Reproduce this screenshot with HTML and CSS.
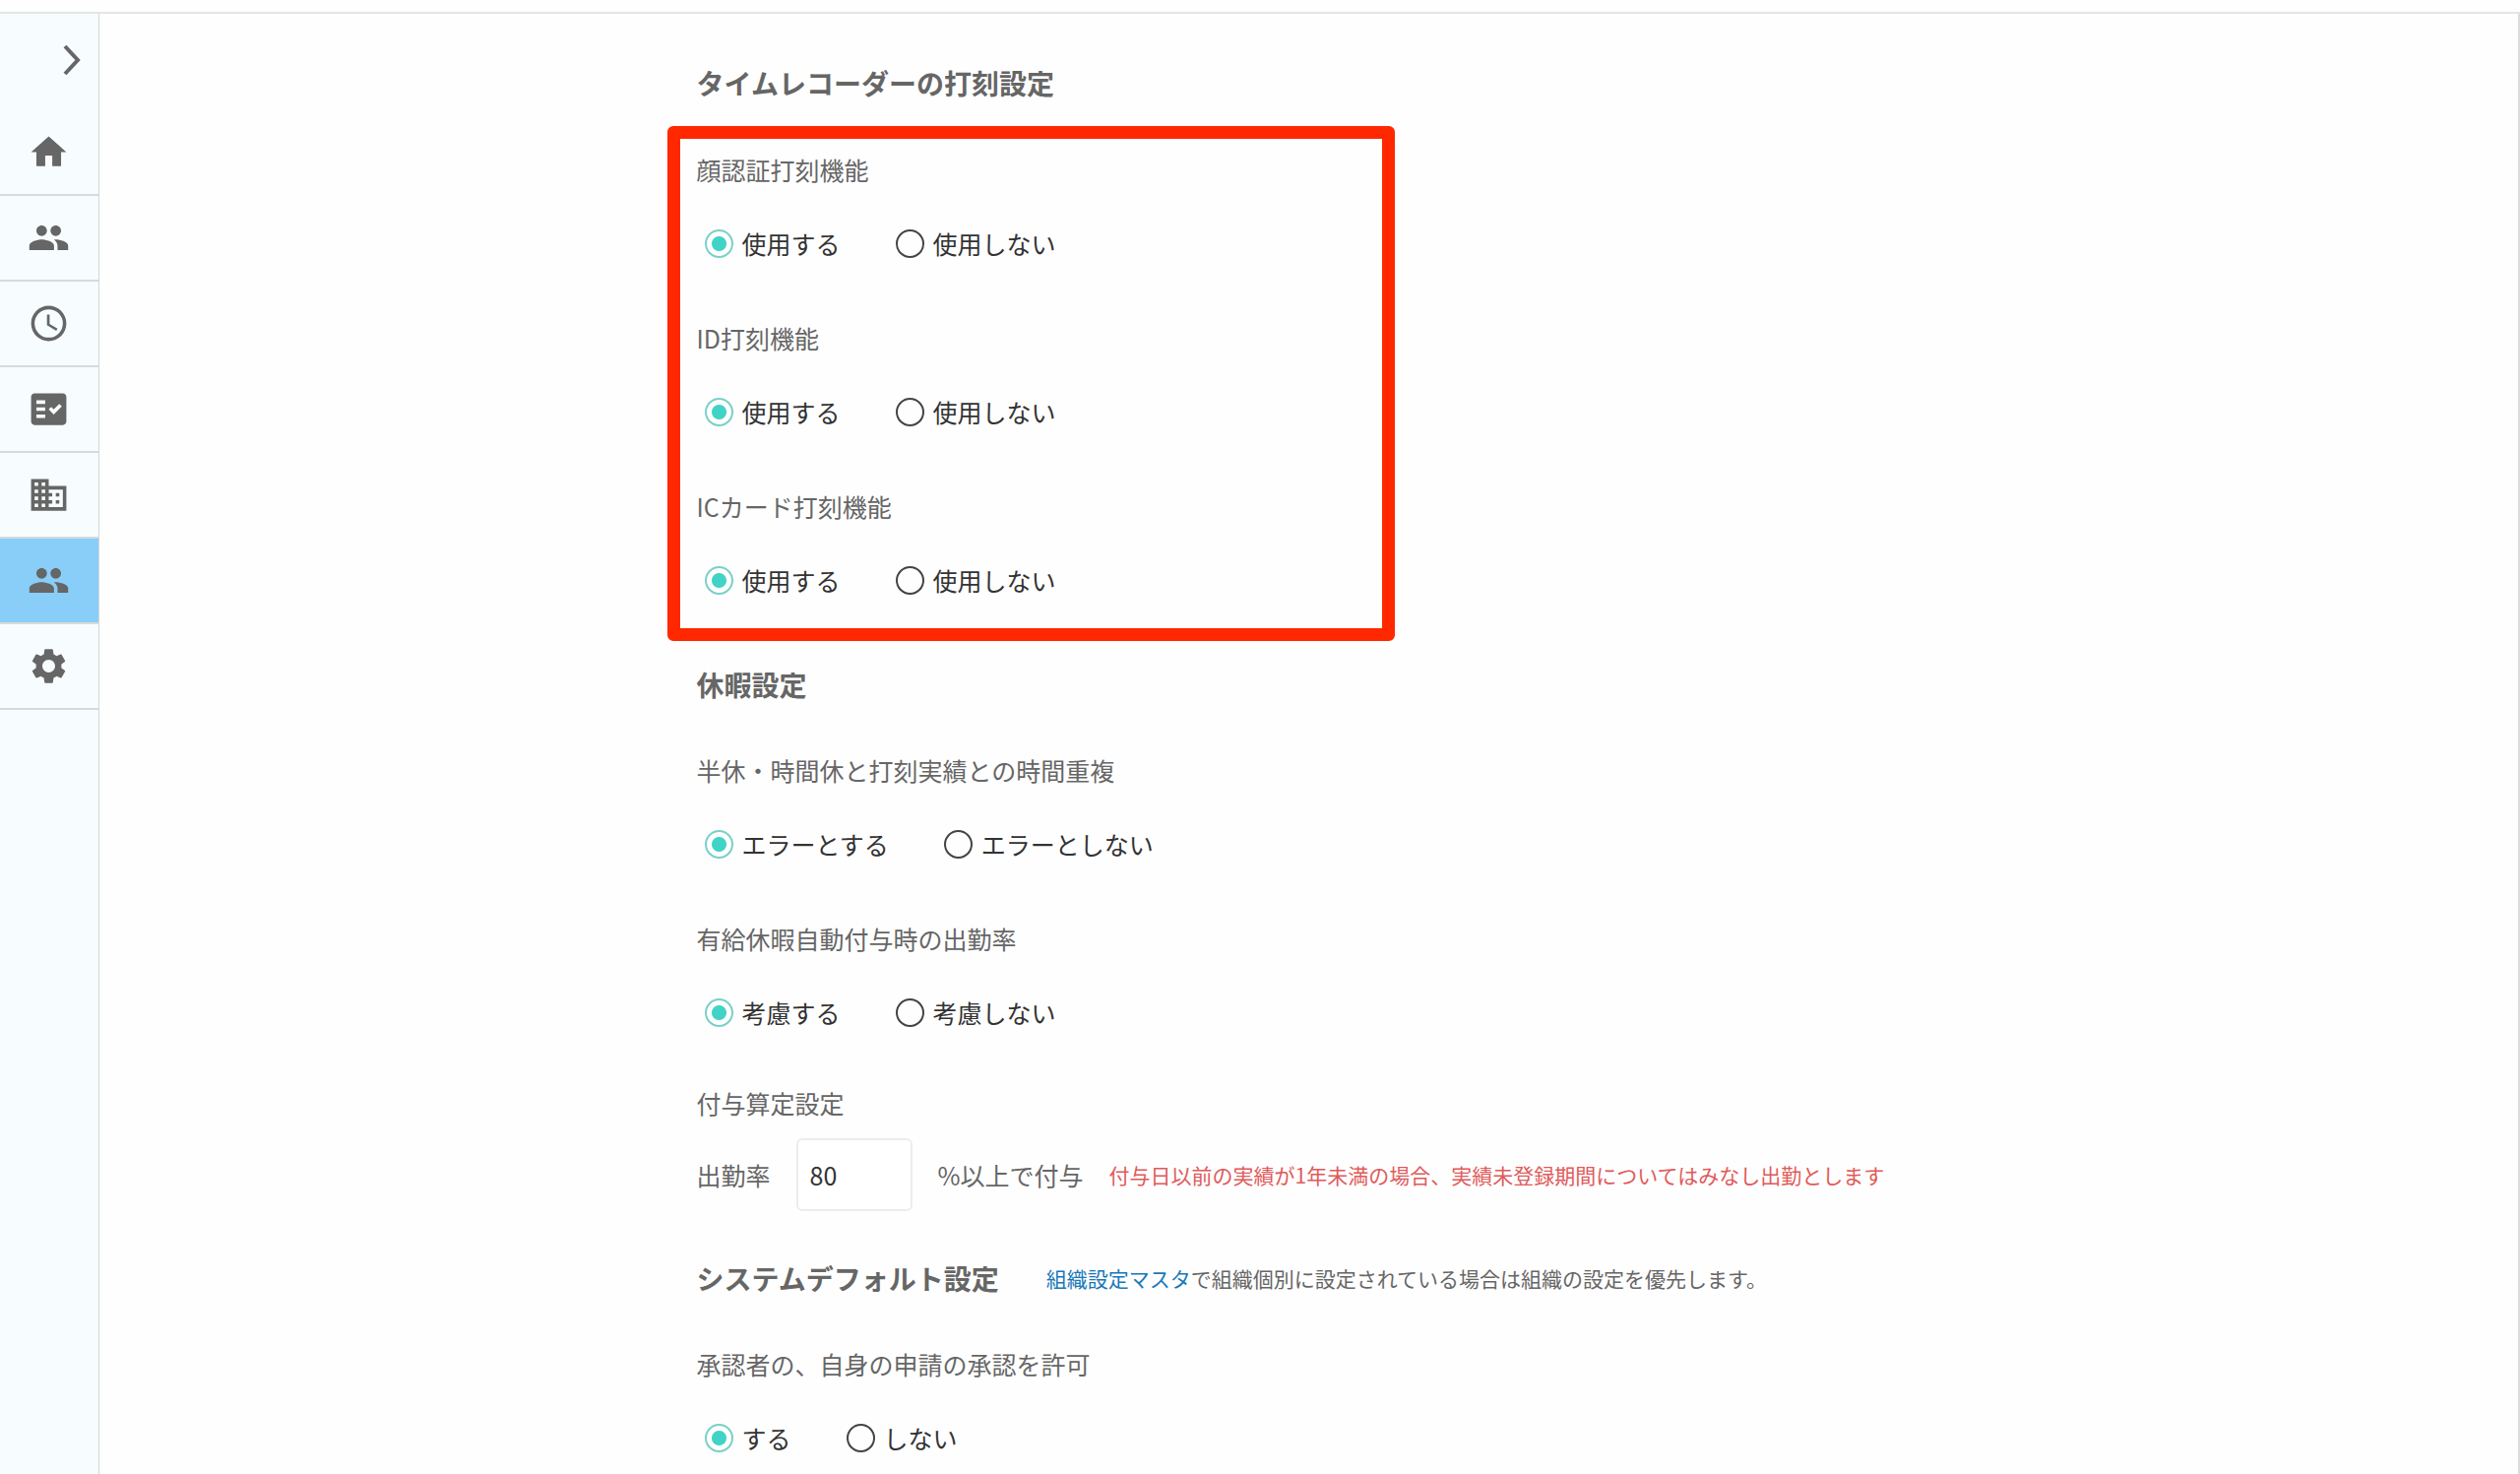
FILE: index.html
```html
<!DOCTYPE html>
<html lang="ja">
  <head>
    <meta charset="UTF-8" />
    <meta name="viewport" content="width=device-width, initial-scale=1.0" />
    <title>打刻設定</title>
    <link rel="stylesheet" href="styles.css">
  </head>
  <body>
    <header class="topbar"></header>
    <div class="layout">
      <nav class="sidebar">
        <button class="toggle" type="button" aria-label="メニューを開く">
          <svg width="18" height="32" viewBox="0 0 18 32"><path d="M2 2l13 14L2 30" fill="none" stroke="currentColor" stroke-width="4" /></svg>
        </button>
        <a class="item" href="#" aria-label="ホーム">
          <svg class="icon" viewBox="0 0 24 24"><path d="M10 20v-6h4v6h5v-8h3L12 3 2 12h3v8z" /></svg>
        </a>
        <a class="item" href="#" aria-label="従業員">
          <svg class="icon" viewBox="0 0 24 24"><path d="M16 11c1.660 0 2.990-1.340 2.990-3S17.660 5 16 5s-3 1.340-3 3 1.340 3 3 3zm-8 0c1.660 0 2.990-1.340 2.990-3S9.660 5 8 5 5 6.340 5 8s1.340 3 3 3zm0 2c-2.330 0-7 1.170-7 3.500V19h14v-2.500c0-2.330-4.670-3.500-7-3.500zm8 0c-.29 0-.62.020-.97.050 1.160.84 1.970 1.970 1.970 3.450V19h6v-2.500c0-2.330-4.670-3.500-7-3.500z" /></svg>
        </a>
        <a class="item" href="#" aria-label="勤怠">
          <svg class="icon" viewBox="0 0 24 24"><path d="M11.990 2C6.470 2 2 6.480 2 12s4.470 10 9.990 10C17.520 22 22 17.520 22 12S17.520 2 11.990 2zM12 20a8 8 0 1 1 0-16 8 8 0 0 1 0 16zM12.500 7H11v6l5.250 3.150.75-1.230-4.500-2.670z" /></svg>
        </a>
        <a class="item" href="#" aria-label="申請">
          <svg class="icon" viewBox="0 0 24 24"><path fill-rule="evenodd" d="M20 3H4c-1.100 0-2 .9-2 2v14c0 1.100.9 2 2 2h16c1.100 0 2-.9 2-2V5c0-1.100-.9-2-2-2zM10 17H5v-2h5v2zm0-4H5v-2h5v2zm0-4H5V7h5v2zm4.820 6L12 12.160l1.410-1.410 1.410 1.420L17.990 9l1.420 1.420L14.820 15z" /></svg>
        </a>
        <a class="item" href="#" aria-label="会社">
          <svg class="icon" viewBox="0 0 24 24"><path d="M12 7V3H2v18h20V7H12zM6 19H4v-2h2v2zm0-4H4v-2h2v2zm0-4H4V9h2v2zm0-4H4V5h2v2zm4 12H8v-2h2v2zm0-4H8v-2h2v2zm0-4H8V9h2v2zm0-4H8V5h2v2zm10 12h-8v-2h2v-2h-2v-2h2v-2h-2V9h8v10zm-2-8h-2v2h2v-2zm0 4h-2v2h2v-2z" /></svg>
        </a>
        <a class="item active" href="#" aria-label="マスタ">
          <svg class="icon" viewBox="0 0 24 24"><path d="M16 11c1.660 0 2.990-1.340 2.990-3S17.660 5 16 5s-3 1.340-3 3 1.340 3 3 3zm-8 0c1.660 0 2.990-1.340 2.990-3S9.660 5 8 5 5 6.340 5 8s1.340 3 3 3zm0 2c-2.330 0-7 1.170-7 3.500V19h14v-2.500c0-2.330-4.670-3.500-7-3.500zm8 0c-.29 0-.62.020-.97.050 1.160.84 1.970 1.970 1.970 3.450V19h6v-2.500c0-2.330-4.670-3.500-7-3.500z" /></svg>
        </a>
        <a class="item" href="#" aria-label="設定">
          <svg class="icon" viewBox="0 0 24 24"><path d="M19.140 12.940c.04-.3.060-.61.060-.94 0-.32-.02-.64-.07-.94l2.030-1.580c.18-.14.23-.41.12-.61l-1.920-3.320c-.12-.22-.37-.29-.59-.22l-2.390.96c-.5-.38-1.030-.7-1.620-.94l-.36-2.540c-.04-.24-.24-.41-.48-.41h-3.840c-.24 0-.43.17-.47.41l-.36 2.540c-.59.24-1.130.57-1.620.94l-2.390-.96c-.22-.08-.47 0-.59.22L2.740 8.870c-.12.21-.08.47.12.61l2.030 1.580c-.05.3-.09.63-.09.94s.02.64.070.94l-2.030 1.580c-.18.14-.23.41-.12.61l1.920 3.320c.12.22.37.29.59.22l2.390-.96c.5.38 1.030.7 1.620.94l.36 2.540c.05.24.24.41.48.41h3.840c.24 0 .44-.17.47-.41l.36-2.540c.59-.24 1.130-.56 1.620-.94l2.390.96c.22.080.47 0 .59-.22l1.920-3.320c.12-.22.070-.47-.12-.61l-2.010-1.580zM12 15.600c-1.980 0-3.600-1.620-3.600-3.600s1.620-3.600 3.600-3.600 3.600 1.620 3.600 3.600-1.620 3.600-3.600 3.600z" /></svg>
        </a>
      </nav>
      <main class="main">
        <form class="content">
          <h2>タイムレコーダーの打刻設定</h2>
          <div class="highlight">
            <fieldset>
              <legend>顔認証打刻機能</legend>
              <div class="radios">
                <label><input type="radio" name="face" checked />使用する</label>
                <label><input type="radio" name="face" />使用しない</label>
              </div>
            </fieldset>
            <fieldset>
              <legend>ID打刻機能</legend>
              <div class="radios">
                <label><input type="radio" name="id" checked />使用する</label>
                <label><input type="radio" name="id" />使用しない</label>
              </div>
            </fieldset>
            <fieldset>
              <legend>ICカード打刻機能</legend>
              <div class="radios">
                <label><input type="radio" name="card" checked />使用する</label>
                <label><input type="radio" name="card" />使用しない</label>
              </div>
            </fieldset>
          </div>

          <h2>休暇設定</h2>
          <div class="group">
            <fieldset>
              <legend>半休・時間休と打刻実績との時間重複</legend>
              <div class="radios">
                <label><input type="radio" name="overlap" checked />エラーとする</label>
                <label><input type="radio" name="overlap" />エラーとしない</label>
              </div>
            </fieldset>
            <fieldset>
              <legend>有給休暇自動付与時の出勤率</legend>
              <div class="radios">
                <label><input type="radio" name="attendance" checked />考慮する</label>
                <label><input type="radio" name="attendance" />考慮しない</label>
              </div>
            </fieldset>
            <fieldset class="calc">
              <legend>付与算定設定</legend>
              <div class="rate">
                <label for="rate">出勤率</label>
                <input id="rate" type="text" value="80" />
                <span>%以上で付与</span>
                <span class="note error">付与日以前の実績が1年未満の場合、実績未登録期間についてはみなし出勤とします</span>
              </div>
            </fieldset>
          </div>

          <div class="heading">
            <h2>システムデフォルト設定</h2>
            <p class="note"><a href="#">組織設定マスタ</a>で組織個別に設定されている場合は組織の設定を優先します。</p>
          </div>
          <div class="group">
            <fieldset>
              <legend>承認者の、自身の申請の承認を許可</legend>
              <div class="radios">
                <label><input type="radio" name="self" checked />する</label>
                <label><input type="radio" name="self" />しない</label>
              </div>
            </fieldset>
          </div>
        </form>
      </main>
    </div>
  </body>
</html>
```
FILE: styles.css
```css
* {
  margin: 0;
  padding: 0;
  box-sizing: border-box;
}
body {
  display: flex;
  flex-direction: column;
  min-height: 100vh;
  font-family: "Noto Sans CJK JP", sans-serif;
  font-size: 25px;
  line-height: 36px;
  color: #666;
  background: #fefefe;
}
.topbar {
  height: 14px;
  border-bottom: 2px solid #e4e5e6;
}
.layout {
  display: flex;
  flex: 1;
}
.sidebar {
  width: 101px;
  background: #f7fdff;
  border-right: 1px solid #d3d7da;
}
.toggle {
  display: flex;
  align-items: center;
  justify-content: flex-end;
  width: 100%;
  height: 98px;
  padding: 0 18px 4px 0;
  color: #666;
  background: none;
  border: 0;
  cursor: pointer;
}
.item {
  display: flex;
  align-items: center;
  justify-content: center;
  height: 87px;
  padding-right: 1px;
  color: #666;
  border-bottom: 2px solid #d6dadd;
}
.item.active {
  background: #89cdf9;
}
.icon {
  width: 43px;
  height: 43px;
  fill: currentColor;
}
.main {
  flex: 1;
  border-right: 2px solid #dcdcdc;
}
.content {
  max-width: 1244px;
  margin: 0 auto;
  padding-top: 50px;
}
h2 {
  font-size: 28px;
  font-weight: 700;
  line-height: 40px;
}
fieldset {
  border: 0;
}
legend {
  display: block;
}

/* 打刻機能の枠 */
.highlight {
  display: flex;
  flex-direction: column;
  gap: 60px;
  max-width: 739px;
  margin: 24px 0 24px -30px;
  padding: 13px 17px 31px;
  border: 13px solid #ff2800;
  border-radius: 6px;
}
.group {
  display: flex;
  flex-direction: column;
  gap: 60px;
  margin: 49px 0 48px;
}

.radios {
  display: flex;
  gap: 56px;
  margin-top: 39px;
  padding-left: 8px;
  color: #333;
}
.radios label {
  display: flex;
  align-items: center;
  gap: 9px;
}
.radios input {
  appearance: none;
  width: 29px;
  height: 29px;
  border: 2px solid #444;
  border-radius: 50%;
}
.radios input:checked {
  background: radial-gradient(circle, #42d3c8 7px, #fff 8px);
  border-color: #7ad0c8;
}

.calc {
  margin-top: -4px;
}
.rate {
  display: flex;
  align-items: center;
  gap: 26px;
  margin-top: 18px;
}
.rate input {
  width: 118px;
  height: 74px;
  padding: 0 12px;
  font: inherit;
  color: #333;
  background: #fff;
  border: 2px solid #ececec;
  border-radius: 6px;
}
.heading {
  display: flex;
  align-items: center;
  gap: 48px;
}
.note {
  font-size: 21px;
}
.error {
  color: #e05a5a;
}
a {
  color: #1878b8;
  text-decoration: none;
}
```
